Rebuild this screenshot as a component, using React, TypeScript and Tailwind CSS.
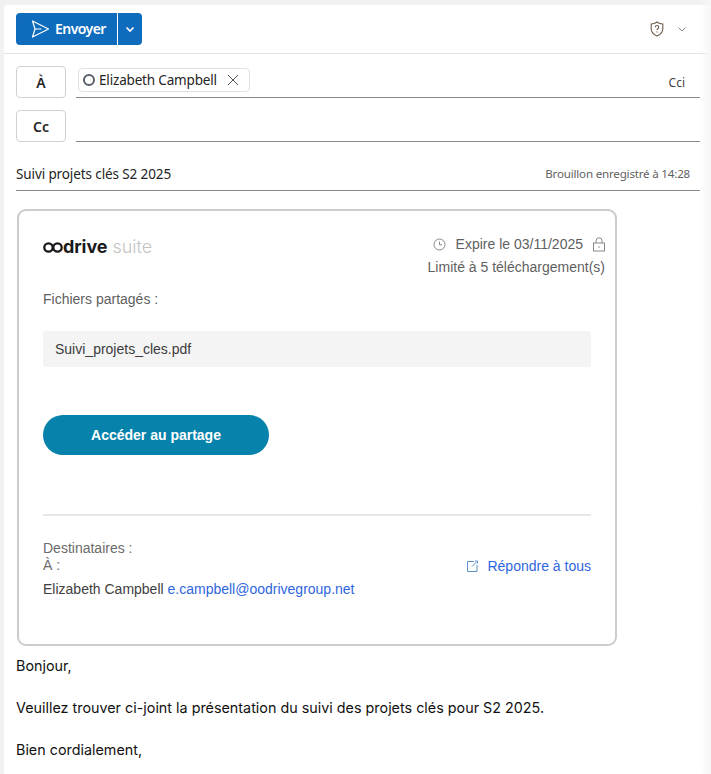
import React from "react";

const seg = { fontFamily: '"Noto Sans", sans-serif' };

function Send() {
  return (
    <svg width="20" height="20" viewBox="0 0 20 20" fill="none" stroke="#fff" strokeWidth="1.2" strokeLinejoin="round">
      <path d="M2.5 2 L18.5 10 L2.5 18 L5 10 Z" />
      <path d="M5 10 H11.5" />
    </svg>
  );
}

function Logo() {
  return (
    <div className="flex items-center h-[20px]">
      <svg width="20" height="11" viewBox="0 0 20 11" fill="none" stroke="#1a1a1a" strokeWidth="2.3" className="mt-[3px]">
        <circle cx="5.5" cy="5.5" r="4.2" />
        <circle cx="14.5" cy="5.5" r="4.2" />
      </svg>
      <span className="text-[18px] font-bold text-[#1a1a1a] tracking-[-0.1px]" style={{ fontFamily: '"Inter", sans-serif' }}>drive</span>
      <span className="text-[18px] font-light text-[#c4c4c4] ml-[5px] tracking-[0px]" style={{ fontFamily: '"Inter", sans-serif' }}>suite</span>
    </div>
  );
}

export default function App() {
  return (
    <div className="w-[711px] h-[774px] bg-[#f1f1f1] pt-[5px] pl-[4px] overflow-hidden relative" style={seg}>
      <div className="bg-white h-full rounded-tl-[3px] flex flex-col">
        <div className="h-[49px] border-b border-[#e2e2e2] flex items-center justify-between pl-[12px] pr-[24px] shrink-0 pb-[1px]">
          <div className="flex h-[32px] rounded-[4px] bg-[#0f6cbd] text-white overflow-hidden">
            <div className="flex items-center w-[102px] pl-[14px] gap-[5px] border-r border-white">
              <Send />
              <span className="text-[14px] font-semibold tracking-[-0.55px]">Envoyer</span>
            </div>
            <div className="flex items-center justify-center w-[24px]">
              <svg width="12" height="12" viewBox="0 0 12 12" fill="none" stroke="#fff" strokeWidth="1.7"><path d="M2.5 4.5 L6 8 L9.5 4.5" /></svg>
            </div>
          </div>
          <div className="flex items-center gap-[13px]">
            <svg width="14" height="16" viewBox="0 0 14 16" fill="none" stroke="#6b5a4a" strokeWidth="1.1">
              <path d="M7 1 C5 2.6 3.2 3 1.2 3 V8 C1.2 11.5 4 13.6 7 15 C10 13.6 12.8 11.5 12.8 8 V3 C10.8 3 9 2.6 7 1 Z" />
              <path d="M5.3 6.2 C5.3 4 8.7 4 8.7 6.2 C8.7 7.6 7 7.4 7 9" />
              <path d="M7 10.4 V11.4" />
            </svg>
            <svg width="10" height="10" viewBox="0 0 10 10" fill="none" stroke="#777" strokeWidth="0.9"><path d="M1.5 3.5 L5 7 L8.5 3.5" /></svg>
          </div>
        </div>

        <div className="pl-[12px] pr-[11px] flex flex-col shrink-0">
          <div className="flex items-start mt-[12px] h-[32px]">
            <div className="w-[50px] h-[32px] border border-[#d1d1d1] rounded-[4px] flex items-center justify-center text-[14px] font-semibold text-[#242424]">À</div>
            <div className="ml-[10px] flex-1 h-[32px] border-b border-[#8a8a8a] flex justify-between items-start relative">
              <div className="ml-[2px] mt-[2px] h-[24px] w-[172px] border border-[#e0e0e0] rounded-[4px] flex items-center pl-[4px] gap-[4px]">
                <span className="w-[12px] h-[12px] rounded-full border-2 border-[#56606a] shrink-0" />
                <span className="text-[13.5px] text-[#242424] tracking-[-0.17px] whitespace-nowrap">Elizabeth Campbell</span>
                <svg width="12" height="12" viewBox="0 0 12 12" fill="none" stroke="#424242" strokeWidth="0.9" className="ml-[6px] shrink-0"><path d="M1 1 L11 11 M11 1 L1 11" /></svg>
              </div>
              <span className="text-[12px] text-[#424242] mt-[8px] mr-[15px]">Cci</span>
            </div>
          </div>
          <div className="flex items-start mt-[12px] h-[32px]">
            <div className="w-[50px] h-[32px] border border-[#d1d1d1] rounded-[4px] flex items-center justify-center text-[14px] font-semibold text-[#242424]">Cc</div>
            <div className="ml-[10px] flex-1 h-[32px] border-b border-[#8a8a8a]" />
          </div>
          <div className="mt-[16px] h-[33px] border-b border-[#8a8a8a] flex items-center justify-between">
            <span className="text-[13.5px] text-[#242424] tracking-[-0.11px]">Suivi projets clés S2 2025</span>
            <span className="text-[11.6px] text-[#616161] mr-[10px] tracking-[-0.2px]">Brouillon enregistré à 14:28</span>
          </div>
        </div>

        <div className="ml-[13px] mt-[18px] w-[600px] h-[437px] border-2 border-[#cccccc] rounded-[9px] shrink-0 flex flex-col pl-[24px] pr-[24px]" style={{ fontFamily: '"Liberation Sans", sans-serif' }}>
          <div className="flex justify-between items-start pt-[22px] mr-[-14px]">
            <div className="mt-[3px]"><Logo /></div>
            <div className="flex flex-col items-end text-[14px] text-[#5f5f5f]">
              <div className="flex items-center h-[23px]">
                <svg width="13" height="13" viewBox="0 0 13 13" fill="none" stroke="#888" strokeWidth="1" className="mr-[10px]">
                  <circle cx="6.5" cy="6.5" r="5.5" />
                  <path d="M6.5 3.5 V6.8 H9" />
                </svg>
                <span>Expire le 03/11/2025</span>
                <svg width="12" height="15" viewBox="0 0 12 15" fill="none" stroke="#888" strokeWidth="1" className="ml-[10px]">
                  <rect x="0.5" y="6" width="11" height="8" />
                  <path d="M3 6 V3.8 A3 3 0 0 1 9 3.8 V6" />
                  <path d="M6 9.5 V10.5" strokeWidth="1.6" />
                </svg>
              </div>
              <div className="h-[22px] leading-[22px]">Limité à 5 téléchargement(s)</div>
            </div>
          </div>
          <div className="mt-[11px] text-[14px] leading-[20px] text-[#5f5f5f]">Fichiers partagés :</div>
          <div className="mt-[22px] h-[36px] bg-[#f4f4f4] rounded-[3px] flex items-center pl-[12px] text-[14px] text-[#3c3c3c]">Suivi_projets_cles.pdf</div>
          <div className="mt-[48px] w-[226px] h-[40px] rounded-[20px] bg-[#0682ab] flex items-center justify-center text-white text-[14px] font-bold">Accéder au partage</div>
          <div className="mt-[59px] h-[2px] bg-[#e6e6e6]" />
          <div className="mt-[24px] flex justify-between items-start">
            <div className="text-[14px] text-[#6b6b6b]">
              <div className="leading-[16px]">Destinataires :</div>
              <div className="leading-[19px]">À :</div>
              <div className="leading-[26px] mt-[1px] text-[#404040]">Elizabeth Campbell <span className="text-[#2f66e0]">e.campbell@oodrivegroup.net</span></div>
            </div>
            <div className="flex items-center text-[14px] text-[#2f66e0] mt-[18px] leading-[16px]">
              <svg width="11" height="12" viewBox="0 0 11 12" fill="none" stroke="#5b93c9" strokeWidth="1" className="mr-[9px]">
                <path d="M7 1.5 H0.5 V11.5 H10 V5" />
                <path d="M5 6.5 L9.5 2 M7.8 1 H10.5 V3.5" />
              </svg>
              <span>Répondre à tous</span>
            </div>
          </div>
        </div>

        <div className="ml-[12px] mt-[9px] text-[14.35px] text-[#111] leading-[21px]" style={{ fontFamily: '"Inter", sans-serif' }}>
          <div>Bonjour,</div>
          <div className="mt-[21px]">Veuillez trouver ci-joint la présentation du suivi des projets clés pour S2 2025.</div>
          <div className="mt-[21px]">Bien cordialement,</div>
        </div>
      </div>
      <div className="absolute top-0 right-0 bottom-0 w-[12px] bg-gradient-to-r from-transparent to-[#f6f6f6]" />
    </div>
  );
}
